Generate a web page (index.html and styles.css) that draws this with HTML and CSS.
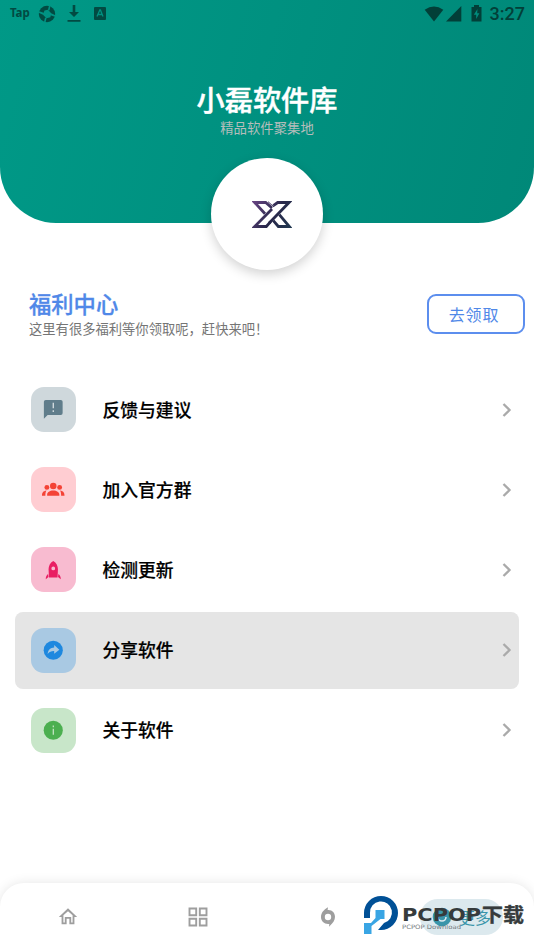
FILE: index.html
```html
<!DOCTYPE html>
<html lang="zh-CN">
<head>
<meta charset="utf-8">
<title>小磊软件库</title>
<link rel="stylesheet" href="styles.css">
</head>
<body>
<div class="screen">
  <header class="hero">
    <div class="status">
      <span class="tap">Tap</span>
      <svg class="st-ball" width="18" height="18" viewBox="0 0 18 18"><circle cx="9" cy="9" r="8.2" fill="#024a42"/><path d="M6.500 5.500 10 4.800l3.200 3.500-.8 3.900L8.500 13.200 5 9.700zM10 4.800 11 .5l1.500.6-1 4.500zM13.200 8.300l4.300 2-.6 1.500-4.500-1.500zM8.500 13.200l-1 4.300-1.500-.6 1-4.500zM5 9.700.6 7.700l.6-1.500 4.500 1.500z" fill="#009283"/></svg>
      <svg class="st-down" width="14" height="18" viewBox="0 0 14 18"><path d="M5.700 0h2.600v7H12l-5 5-5-5h3.700zM.5 15h13v1.800H.5z" fill="#024a42"/></svg>
      <svg class="st-a" width="12" height="13" viewBox="0 0 12 13"><rect width="12" height="13" rx="1" fill="#024a42"/><path d="M3 9.500 5.800 3h.6L9 9.500M4 7.500h4" fill="none" stroke="#009180" stroke-width="1.300"/></svg>
      <span class="grow"></span>
      <svg class="st-wifi" width="20" height="16" viewBox="0 0 20 16"><path d="M.7 3.800Q10-3 19.300 3.800L10 15.500z" fill="#023f38"/></svg>
      <svg class="st-signal" width="16" height="16" viewBox="0 0 16 16"><path d="M0 15.500 15.300 0v15.500z" fill="#023f38"/></svg>
      <svg class="st-batt" width="11" height="17" viewBox="0 0 11 17"><path d="M3 0h5v2h2.500v14.500H.5V2H3z" fill="#023f38"/><path d="M6.500 4 2.800 9.700h2.400V14l3.200-5.700H6.200z" fill="#008c7c"/></svg>
      <span class="time">3:27</span>
    </div>
    <h1>小磊软件库</h1>
    <p class="sub">精品软件聚集地</p>
    <div class="avatar">
      <svg width="40" height="27" viewBox="0 0 120 81">
        <defs><linearGradient id="xg" gradientUnits="userSpaceOnUse" x1="0" x2="120" y1="0" y2="81"><stop offset="0" stop-color="#684483"/><stop offset=".55" stop-color="#28284a"/><stop offset="1" stop-color="#203850"/></linearGradient></defs>
        <g fill="none" stroke="url(#xg)" stroke-width="8.500">
          <path d="M60 21 41 4.500H8L39 38"/>
          <path d="M60 24 8 76.500h35L56 62"/>
          <path d="M64 14 77 4.500h34L51 67"/>
          <path d="M82 41 112 76.500H79L64 59"/>
          <path d="M48 2 66 18" stroke-width="3"/>
        </g>
      </svg>
    </div>
  </header>

  <section class="welfare">
    <div>
      <h2>福利中心</h2>
      <p>这里有很多福利等你领取呢，赶快来吧！</p>
    </div>
    <button class="claim">去领取</button>
  </section>

  <main class="menu">
    <div class="row">
      <span class="tile slate"><svg width="24" height="24" viewBox="0 0 24 24"><path fill="#607d8b" d="M20 2H4a2 2 0 0 0-2 2v18l4-4h14a2 2 0 0 0 2-2V4a2 2 0 0 0-2-2z"/><path fill="#cfd8dc" d="M11.300 5h1.500v6h-1.500zm0 8h1.500v2h-1.500z"/></svg></span>
      <span class="label">反馈与建议</span>
      <svg class="chev" width="10" height="16" viewBox="0 0 10 16"><path d="m1.500 2 6 6-6 6"/></svg>
    </div>
    <div class="row">
      <span class="tile red"><svg width="24" height="24" viewBox="0 0 24 24" fill="#f44336"><circle cx="12" cy="8.500" r="3.500"/><circle cx="5.200" cy="10" r="2.600"/><circle cx="18.800" cy="10" r="2.600"/><path d="M5.500 19v-1.400c0-2.500 2.800-4.300 6.500-4.300s6.500 1.800 6.500 4.300V19zM0 19c0-3.200 1-5 4.800-5.600-1 1.200-1.200 3-1.200 5.600zM24 19c0-3.200-1-5-4.800-5.600 1 1.200 1.200 3 1.200 5.600z"/></svg></span>
      <span class="label">加入官方群</span>
      <svg class="chev" width="10" height="16" viewBox="0 0 10 16"><path d="m1.500 2 6 6-6 6"/></svg>
    </div>
    <div class="row">
      <span class="tile pink"><svg width="24" height="24" viewBox="0 0 24 24"><path fill="#e91e63" fill-rule="evenodd" d="M12 2c3.400 2 5 5.200 5 9l-.4 8.700H7.400L7 11c0-3.800 1.600-7 5-9zm0 6a2 2 0 1 0 0 4 2 2 0 0 0 0-4zM6.500 16l.4 3.300L4 21.600c0-2.600.7-4.400 2.500-5.600zM17.500 16l-.4 3.300 2.900 2.300c0-2.600-.7-4.400-2.500-5.600z"/></svg></span>
      <span class="label">检测更新</span>
      <svg class="chev" width="10" height="16" viewBox="0 0 10 16"><path d="m1.500 2 6 6-6 6"/></svg>
    </div>
    <div class="row active">
      <span class="tile blue"><svg width="24" height="24" viewBox="0 0 24 24"><circle cx="12" cy="12" r="10.200" fill="#1e88df"/><path d="M6 16c.5-4.700 3-6.700 7-6.900V6.500l5.500 4.900-5.500 4.400v-2.900c-3-.1-5 .8-7 3.100z" fill="#a9c9e3"/></svg></span>
      <span class="label">分享软件</span>
      <svg class="chev" width="10" height="16" viewBox="0 0 10 16"><path d="m1.500 2 6 6-6 6"/></svg>
    </div>
    <div class="row">
      <span class="tile green"><svg width="24" height="24" viewBox="0 0 24 24"><circle cx="12" cy="12" r="10.200" fill="#4caf50"/><path d="M11.400 7h1.300v1.700h-1.300zm0 3.400h1.300v6.300h-1.300z" fill="#c8e6c9"/></svg></span>
      <span class="label">关于软件</span>
      <svg class="chev" width="10" height="16" viewBox="0 0 10 16"><path d="m1.500 2 6 6-6 6"/></svg>
    </div>
  </main>

  <nav class="tabs">
    <span class="tab"><svg width="22" height="22" viewBox="0 0 24 24" fill="#9e9e9e"><path d="m12 5.700 5 4.500V18h-1.500v-6h-7v6H7v-7.800zM12 2.500 2 12h3v8h5.500v-6h3v6H19v-8h3z"/></svg></span>
    <span class="tab"><svg width="20" height="20" viewBox="0 0 20 20" fill="none" stroke="#9e9e9e" stroke-width="1.900"><path d="M1.500 1.500h6.700v6.700H1.500zM11.800 1.500h6.700v6.700h-6.700zM1.500 11.800h6.700v6.700H1.500zM11.800 11.800h6.700v6.700h-6.700z"/></svg></span>
    <span class="tab"><svg width="16" height="20" viewBox="0 0 16 20"><path fill="#9e9e9e" fill-rule="evenodd" d="M8 .3 7.600 3C12 2.400 15 5.800 15 9.800c0 3.500-2 6.200-6 9.900l.3-2.800C4.500 17.500 1 14.200 1 10c0-4 2.500-7 7-9.700zM8 6.800a3.200 3.200 0 1 0 0 6.400 3.200 3.200 0 0 0 0-6.400z"/></svg></span>
    <span class="tab pill"><svg width="20" height="20" viewBox="0 0 20 20"><circle cx="10" cy="10" r="9.300" fill="#3995aa"/><path d="M6 10a4 4 0 0 0 8 0" fill="none" stroke="#dce9ee" stroke-width="1.600"/></svg><span>更多</span></span>
  </nav>

  <div class="watermark">
    <svg width="164" height="42" viewBox="0 0 164 42">
      <path fill="#005096" d="M1 23V18A17 17 0 1 1 18 35h-3l6-7A11 11 0 1 0 7 18v5z"/>
      <path fill="#39a5e4" d="M12.500 15h9v9h-4L8.500 31v8H1V28h7l4.500-5z"/>
      <text class="brand" x="39" y="25.700" textLength="79" lengthAdjust="spacingAndGlyphs">PCPOP</text>
      <text class="brand-cn" x="119" y="27" textLength="42" lengthAdjust="spacingAndGlyphs">下载</text>
      <text class="brand-sub" x="39" y="34.300" textLength="59" lengthAdjust="spacingAndGlyphs">PCPOP Download</text>
    </svg>
  </div>
</div>
</body>
</html>
```
FILE: styles.css
```css
* { box-sizing: border-box; }
body {
  margin: 0;
  background: #fff;
  font-family: Roboto, "Noto Sans CJK SC", sans-serif;
}
h1, h2, p { margin: 0; }
svg { display: block; flex: none; }
.screen {
  position: relative;
  width: 534px;
  height: 950px;
  display: flex;
  flex-direction: column;
  overflow: hidden;
}
.hero {
  height: 222.5px;
  flex: none;
  display: flex;
  flex-direction: column;
  align-items: center;
  background: linear-gradient(105deg, #009987, #008878);
  border-radius: 0 0 56px 56px;
}
.status {
  width: 100%;
  height: 27px;
  display: flex;
  align-items: center;
  padding: 0 9px 0 10px;
  color: #024a42;
}
.tap { width: 28px; font: 700 11.5px/20px "Noto Sans", sans-serif; letter-spacing: -0.1px; padding-bottom: 2px; }
.st-down { margin-left: 11px; }
.st-a { margin-left: 13px; }
.grow { flex: 1; }
.st-signal { margin-left: 2px; }
.st-batt { margin: 0 8px 0 9px; }
.time { color: #023f38; font-size: 18px; font-weight: 500; line-height: 27px; }
h1 {
  margin-top: 55px;
  color: #fff;
  font-size: 28.2px;
  font-weight: 500;
  line-height: 40px;
  -webkit-text-stroke: .4px #fff;
}
.sub { margin-top: -2px; color: #b5bdbb; font-size: 13.4px; line-height: 18px; }
.avatar {
  width: 112px;
  height: 112px;
  flex: none;
  margin-top: 19.5px;
  padding: 1px 0 0 10px;
  display: flex;
  align-items: center;
  justify-content: center;
  background: #fff;
  border-radius: 50%;
  box-shadow: 0 4px 12px rgba(0, 0, 0, .18);
}
.welfare {
  margin: 68px 9px 0 29px;
  height: 50px;
  display: flex;
  justify-content: space-between;
}
h2 {
  color: #5088e8;
  font-size: 22.3px;
  font-weight: 500;
  line-height: 29.5px;
  -webkit-text-stroke: .3px #5088e8;
}
.welfare p { color: #757575; font-size: 13.3px; line-height: 19px; }
.claim {
  width: 98px;
  height: 40px;
  margin-top: 3.5px;
  padding: 0 4px 0 0;
  color: #5088e8;
  background: #fff;
  border: 2px solid #5c8eee;
  border-radius: 9px;
  font: 400 16px "Noto Sans CJK SC", sans-serif;
  letter-spacing: .8px;
}
.menu {
  margin: 30.5px 15px 0;
  display: flex;
  flex-direction: column;
  gap: 3.2px;
}
.row {
  height: 77px;
  display: flex;
  align-items: center;
  padding: 0 7px 0 16px;
  border-radius: 8px;
}
.row.active { background: #e5e5e5; }
.tile {
  width: 45px;
  height: 45px;
  display: flex;
  align-items: center;
  justify-content: center;
  border-radius: 13px;
}
.tile svg { width: 22.5px; height: 22.5px; }
.slate { background: #cfd8dc; }
.red { background: #ffcdd2; }
.pink { background: #f8bbd0; }
.blue { background: #a9c9e3; }
.green { background: #c8e6c9; }
.label {
  flex: 1;
  margin-left: 26.5px;
  padding-top: 2px;
  color: #000;
  font-size: 17.8px;
  font-weight: 500;
  line-height: 26px;
  -webkit-text-stroke: .2px #000;
}
.chev path { fill: none; stroke: #aaa; stroke-width: 2.3; }
.tabs {
  height: 67px;
  margin-top: auto;
  flex: none;
  display: grid;
  grid-template-columns: 136px 124px 136px 138px;
  align-items: center;
  background: #fff;
  border-radius: 24px 24px 0 0;
  box-shadow: 0 0 12px rgba(0, 0, 0, .1);
}
.tab { display: flex; justify-content: center; align-items: center; }
.pill {
  width: 83px;
  height: 36px;
  margin-left: 24px;
  gap: 7px;
  background: #dce9ee;
  border-radius: 18px;
  color: #3995aa;
  font-size: 16px;
}
.watermark { position: absolute; left: 363px; top: 895px; }
.brand { font: 700 17.5px "DejaVu Sans", sans-serif; fill: #363b3c; }
.brand-cn { font: 700 19px "Noto Sans CJK SC", sans-serif; fill: #363b3c; stroke: #363b3c; stroke-width: .4; }
.brand-sub { font: 6px "DejaVu Sans", sans-serif; fill: #737a7d; }
```
